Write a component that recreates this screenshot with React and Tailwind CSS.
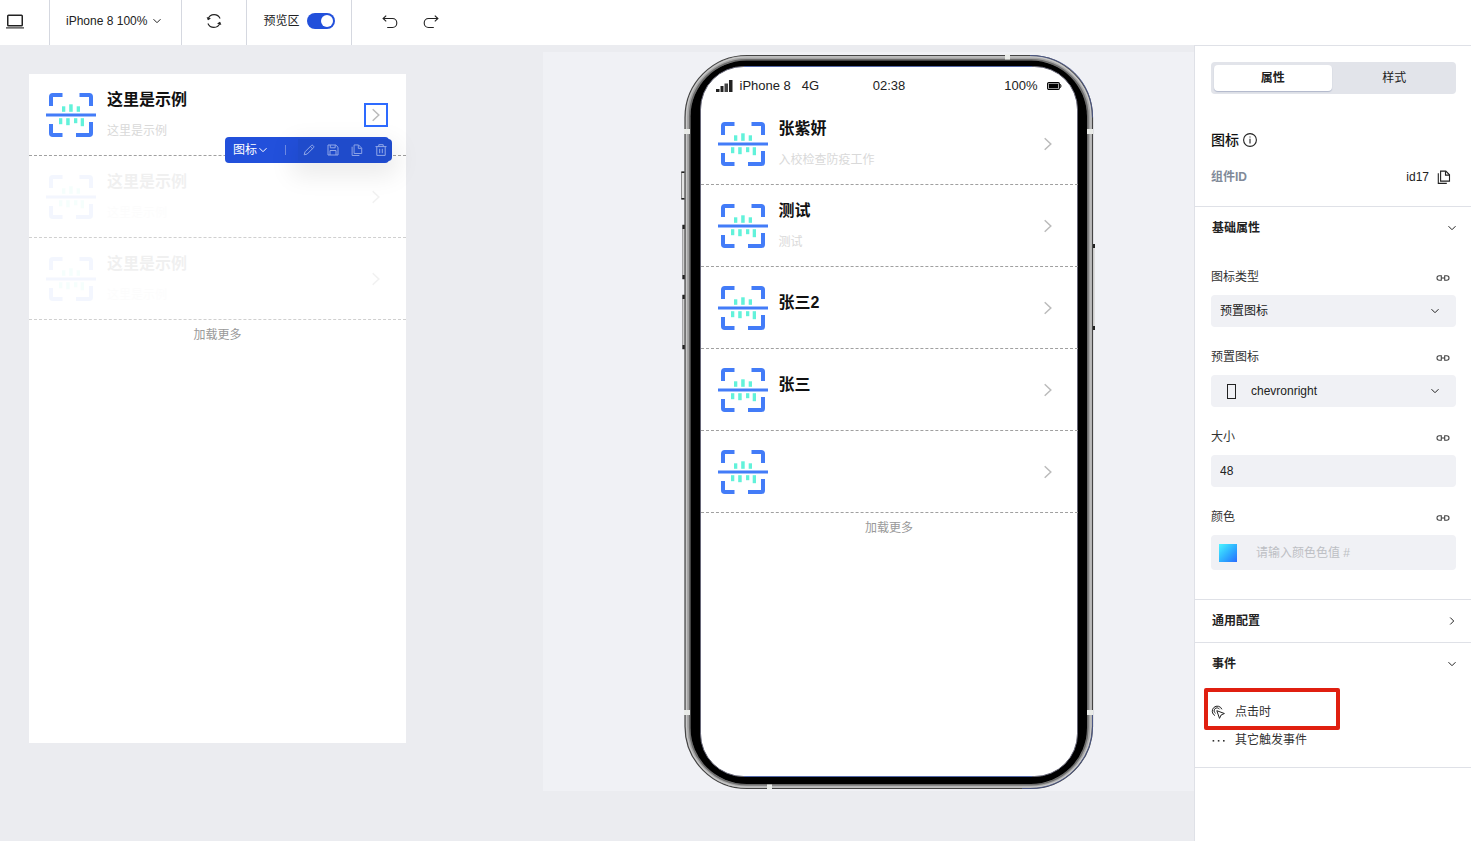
import React from "react";

function ChevronDown({ className = "" }) {
  return (
    <svg width="10" height="10" viewBox="0 0 10 10" fill="none" stroke="currentColor" className={className} aria-hidden="true">
      <path d="M1.5 3.2 5 6.700 8.500 3.200" strokeWidth="1" />
    </svg>
  );
}

function ChevronRightSmall() {
  return (
    <svg width="10" height="10" viewBox="0 0 10 10" fill="none" stroke="currentColor" aria-hidden="true">
      <path d="M3.2 1.5 6.7 5 3.2 8.5" strokeWidth="1" />
    </svg>
  );
}

function LaptopIcon() {
  return (
    <svg width="18" height="16" viewBox="0 0 18 16" fill="none" stroke="#222" aria-hidden="true">
      <rect x="1.75" y="1.25" width="14.5" height="10.5" rx="0.8" strokeWidth="1.5" />
      <path d="M0 13.9H18" strokeWidth="1.1" />
    </svg>
  );
}

function RefreshIcon() {
  return (
    <svg width="16" height="16" viewBox="0 0 16 16" fill="none" stroke="#222" strokeWidth="1.1" aria-hidden="true">
      <path d="M1.9 6.4C2.8 3.6 5.2 1.6 8.1 1.6c2.7 0 5 1.5 6 3.9" />
      <path d="M14.1 9.6c-.9 2.8-3.300 4.800-6.200 4.800-2.700 0-5-1.500-6-3.900" />
      <path d="M.6 4.1 2 7.2l3-1.6z" fill="#222" stroke="none" />
      <path d="M15.4 12.1 14 8.8l-3 1.8z" fill="#222" stroke="none" />
    </svg>
  );
}

function UndoIcon({ flip }) {
  return (
    <svg width="16" height="16" viewBox="0 0 16 16" fill="none" stroke="#222" strokeWidth="1.1" className={flip ? "-scale-x-100" : ""} aria-hidden="true">
      <path d="M4.200 1.600 1.100 4.500l3.100 2.900" />
      <path d="M1.200 4.500h9.300c2.500 0 4.300 2 4.300 4.500s-1.800 4.500-4.300 4.500H5.200" />
    </svg>
  );
}

function CopyIcon({ size = 14 }) {
  return (
    <svg width={size} height={size} viewBox="0 0 14 14" fill="none" stroke="currentColor" strokeWidth="1.1" aria-hidden="true">
      <path d="M3.600 1.100h5.200l3.700 3.700v6.300H3.600z" />
      <path d="M8.500 1.300v3.800h3.800" />
      <path d="M1.300 3.200v10.200h8.500" />
    </svg>
  );
}

function PencilIcon() {
  return (
    <svg width="12" height="12" viewBox="0 0 12 12" fill="none" stroke="currentColor" aria-hidden="true">
      <path d="M1.200 10.800 2 7.800 8.300 1.500a1.200 1.200 0 0 1 1.700 0l.5.5a1.200 1.200 0 0 1 0 1.700L4.200 10z" />
      <path d="M7.300 2.500l2.200 2.200" />
    </svg>
  );
}

function SaveIcon() {
  return (
    <svg width="12" height="12" viewBox="0 0 12 12" fill="none" stroke="currentColor" aria-hidden="true">
      <path d="M1 1h7.800L11 3.200V11H1z" />
      <path d="M3.300 1v2.800h4.900V1M3 11V6.500h6V11" />
    </svg>
  );
}

function TrashIcon() {
  return (
    <svg width="12" height="12" viewBox="0 0 12 12" fill="none" stroke="currentColor" aria-hidden="true">
      <path d="M.5 2.600h11M3.800 2.500V.7h4.400v1.800M1.800 2.600v8.800h8.400V2.600M4.700 4.800v4.400M7.300 4.800v4.400" />
    </svg>
  );
}

function InfoIcon() {
  return (
    <svg width="14" height="14" viewBox="0 0 14 14" fill="none" stroke="#222" aria-hidden="true">
      <circle cx="7" cy="7" r="6.4" strokeWidth="1.1" />
      <path d="M7 5.800v4.700M7 3.400v1.200" strokeWidth="1.1" />
    </svg>
  );
}

function LinkIcon() {
  return (
    <svg width="14" height="8" viewBox="0 0 14 8" fill="none" stroke="#444" strokeWidth="1.1" aria-hidden="true">
      <path d="M5.300 1.800H3.200C1.800 1.800 1 2.700 1 4s.8 2.200 2.200 2.200h2.100z" />
      <path d="M8.700 1.800h2.100C12.200 1.800 13 2.700 13 4s-.8 2.200-2.200 2.200H8.700z" />
      <path d="M5.300 4h3.400" />
    </svg>
  );
}

function ClickIcon() {
  return (
    <svg width="14" height="14" viewBox="0 0 14 14" fill="none" stroke="#222" strokeWidth="1" aria-hidden="true">
      <path d="M4 10.600A5 5 0 1 1 10.900 4.300" />
      <path d="M4.600 8.300A2.900 2.900 0 1 1 8.500 4.300" />
      <path d="M5.800 5.700 13.400 8.500 10.100 10 8.500 13.400z" strokeLinejoin="round" />
    </svg>
  );
}

function ScanIcon() {
  return (
    <svg width="50" height="50" viewBox="0 0 50 50" fill="none" className="shrink-0" aria-hidden="true">
      <g stroke="#437cf8" strokeWidth="4">
        <path d="M5 16V6.800q0-1.800 1.800-1.800H16.500" />
        <path d="M33.500 5h9.700q1.800 0 1.800 1.800V16" />
        <path d="M5 34v9.200q0 1.800 1.800 1.800H16.500" />
        <path d="M30 45h13.200q1.800 0 1.800-1.800V32" />
      </g>
      <path d="M0 25H50" stroke="#437cf8" strokeWidth="3" />
      <g fill="#62f2da">
        <rect x="16" y="16.300" width="3.300" height="5.500" />
        <rect x="23.200" y="14.300" width="3.500" height="7.500" />
        <rect x="30.700" y="16.300" width="3.300" height="5.500" />
        <rect x="13" y="28.200" width="3.300" height="6" />
        <rect x="20.200" y="28.200" width="3.500" height="7" />
        <rect x="28" y="28.200" width="3.300" height="5" />
        <rect x="34.700" y="28.200" width="3.300" height="8" />
      </g>
    </svg>
  );
}

function ListRow({ title, subtitle, faded, selected, children }) {
  return (
    <div className={`relative h-[82px] border-b border-dashed ${faded ? "border-[#d0d0d0]" : "border-[#a0a0a0]"}`}>
      <div className="flex h-full items-center pr-[18px] pl-[17px]">
        <div className={`flex flex-1 items-center ${faded ? "opacity-6" : ""}`}>
          <ScanIcon />
          <div className="ml-[11px] flex-1 pb-px">
            <div className="h-6 text-[16px] leading-6 font-bold text-[#111]">{title}</div>
            <div className="mt-[9px] text-[12px] leading-5 text-[#d9d9d9]">{subtitle}</div>
          </div>
        </div>
        <div className={`flex size-6 items-center justify-center ${selected ? "border-2 border-[#2e6bff]" : ""} ${faded ? "opacity-20" : ""}`}>
          <svg width="10" height="14" viewBox="0 0 10 14" fill="none" stroke="#bbb" strokeWidth="1.500" aria-hidden="true" className="shrink-0">
            <path d="M1.700 1.200 7.800 7 1.700 12.800" />
          </svg>
        </div>
      </div>
      {children}
    </div>
  );
}

function LoadMore() {
  return (
    <button type="button" className="block h-[30px] w-full text-center text-[12px] leading-[30px] text-[#999]">
      加载更多
    </button>
  );
}

function Toolbar() {
  return (
    <div className="absolute top-[63px] right-[14px] z-10 flex h-[26px] w-[167px] items-center text-white">
      <div className="absolute inset-y-0 left-0 w-[164px] rounded bg-[#2250db]" />
      <button type="button" className="relative ml-2 flex items-center gap-px text-[12px] leading-5">
        图标
        <ChevronDown />
      </button>
      <span className="relative ml-[17px] h-2.5 w-px bg-[#6f8ce6]" />
      <div className="relative ml-auto flex h-[22px] items-center gap-3 rounded-r bg-[#1f4bcb] px-[5px] text-[#92a8e8] shadow-[0_9px_24px_6px_rgba(0,0,0,0.08)]">
        <button type="button" aria-label="编辑"><PencilIcon /></button>
        <button type="button" aria-label="保存"><SaveIcon /></button>
        <button type="button" aria-label="复制"><CopyIcon size={12} /></button>
        <button type="button" aria-label="删除"><TrashIcon /></button>
      </div>
    </div>
  );
}

function Board() {
  return (
    <div className="h-[669px] w-[377px] bg-white">
      <ListRow title="这里是示例" subtitle="这里是示例" selected>
        <Toolbar />
      </ListRow>
      <ListRow title="这里是示例" subtitle="这里是示例" faded />
      <ListRow title="这里是示例" subtitle="这里是示例" faded />
      <LoadMore />
    </div>
  );
}

function PhoneFrame() {
  return (
    <svg className="absolute inset-0 overflow-visible" width="410" height="736" viewBox="0 0 410 736" fill="none" aria-hidden="true">
      <g fill="#e4e4e4" stroke="#777" strokeWidth="0.8">
        <rect x="-2.500" y="118" width="4" height="27" />
        <rect x="-1.200" y="171" width="3" height="54" />
        <rect x="-1.200" y="241" width="3" height="54" />
      </g>
      <rect x="408.500" y="190" width="2.500" height="86" fill="#dcdcdc" />
      <g fill="#222">
        <rect x="-2.500" y="117.500" width="3" height="1.500" />
        <rect x="-2.500" y="144" width="3" height="1.500" />
        <rect x="-1.500" y="171" width="2.500" height="4" />
        <rect x="-1.500" y="221" width="2.500" height="4" />
        <rect x="-1.500" y="241" width="2.500" height="4" />
        <rect x="-1.500" y="291" width="2.500" height="4" />
        <rect x="409" y="190" width="2" height="4" />
        <rect x="409" y="272" width="2" height="4" />
      </g>
      <rect x="1" y="1.500" width="407.500" height="733" rx="62" fill="#a4a4a4" stroke="#444" strokeWidth="1.200" />
      <rect x="2.500" y="2.800" width="404.500" height="730.400" rx="60.500" stroke="#c8c8c8" strokeWidth="1.200" />
      <rect x="5.700" y="5.700" width="398.100" height="725" rx="57" stroke="#6c6c6c" strokeWidth="1.600" />
      <rect x="6.500" y="6.500" width="396.500" height="723.500" rx="56" fill="#000" />
      <rect x="16.500" y="12.500" width="377" height="710" rx="43" fill="#fff" stroke="#667" strokeWidth="1" />
      <path d="M60 12.500H348M60 722.500H348" stroke="#5468a8" />
      <path d="M338 734.500h8.500c34 0 62-28 62-62v-14M346 1.500c36 0 62.500 26 62.500 62" stroke="#4b5a94" strokeWidth="0.8" />
      <g fill="#e9ebe8">
        <rect x="321" y="0.500" width="5" height="5" />
        <rect x="83" y="730.500" width="5" height="5" />
        <rect x="0" y="75" width="6" height="5" />
        <rect x="403" y="75" width="6" height="5" />
        <rect x="0" y="656" width="6" height="5" />
        <rect x="403" y="656" width="6" height="5" />
      </g>
    </svg>
  );
}

const RECORDS = [
  { title: "张紫妍", subtitle: "入校检查防疫工作" },
  { title: "测试", subtitle: "测试" },
  { title: "张三2", subtitle: "" },
  { title: "张三", subtitle: "" },
  { title: "", subtitle: "" },
];

function Phone() {
  return (
    <div className="relative h-[736px] w-[410px] pt-[13px] pr-4 pb-[14px] pl-[17px]">
      <PhoneFrame />
      <div className="relative">
        <div className="grid h-9 grid-cols-3 items-center px-[15px] pt-0.5 text-[13px] leading-5 text-[#222]">
          <div className="flex items-center gap-[7px] whitespace-nowrap">
            <svg width="17" height="12" viewBox="0 0 17 12" fill="#222" aria-hidden="true">
              <rect x="0" y="9" width="3.500" height="3" />
              <rect x="4.500" y="6" width="3" height="6" />
              <rect x="8.500" y="3.500" width="3.500" height="8.500" fill="#444" />
              <rect x="13" y="0" width="3.500" height="12" />
            </svg>
            <span>iPhone 8</span>
            <span className="pl-1">4G</span>
          </div>
          <div className="text-center">02:38</div>
          <div className="flex items-center justify-end gap-2.5">
            <span>100%</span>
            <svg width="15" height="8" viewBox="0 0 15 8" fill="none" aria-hidden="true">
              <rect x="0.600" y="0.600" width="11.800" height="6.800" rx="1.200" stroke="#000" strokeWidth="1.100" />
              <rect x="1.800" y="1.800" width="9.400" height="4.400" rx="0.500" fill="#000" />
              <path d="M13 2.200c1.300.2 1.300 3.400 0 3.600" stroke="#000" />
            </svg>
          </div>
        </div>
        {RECORDS.map((r, i) => (
          <ListRow key={i} title={r.title} subtitle={r.subtitle} />
        ))}
        <LoadMore />
      </div>
    </div>
  );
}

function Field({ id, label, children }) {
  return (
    <div>
      <div className="mb-2 flex h-5 items-center justify-between pr-1.5">
        <label htmlFor={id} className="text-[12px] leading-5 text-[#333]">{label}</label>
        <button type="button" aria-label="绑定" className="mt-0.5"><LinkIcon /></button>
      </div>
      {children}
    </div>
  );
}

function SectionHeader({ title, open }) {
  return (
    <button type="button" className="flex h-[42px] w-full items-center justify-between pr-[14px] pl-[17px] text-[12px] leading-5 font-bold text-[#222]">
      {title}
      {open ? <ChevronDown /> : <ChevronRightSmall />}
    </button>
  );
}

function Sidebar() {
  return (
    <aside className="w-[277px] shrink-0 border-t border-l border-[#dfe1e7] bg-white text-[12px] text-[#222]">
      <div className="border-b border-[#dfe1e7] pt-4 pr-[15px] pb-[17px] pl-4">
        <div role="tablist" className="grid h-8 grid-cols-2 gap-1 rounded bg-[#e2e4ea] p-[3px]">
          <button type="button" role="tab" aria-selected="true" className="rounded-sm bg-white font-bold shadow-[0_1px_1px_rgba(60,80,130,0.3)]">属性</button>
          <button type="button" role="tab" aria-selected="false">样式</button>
        </div>
        <h2 className="mt-[34px] flex h-6 items-center gap-1 text-[14px] font-medium text-[#111]">
          图标 <InfoIcon />
        </h2>
        <div className="mt-[13px] flex h-6 items-center justify-between pr-[5px]">
          <span className="font-bold text-[#818a99]">组件ID</span>
          <span className="flex items-center gap-2">
            id17
            <button type="button" aria-label="复制ID"><CopyIcon /></button>
          </span>
        </div>
      </div>

      <section className="border-b border-[#dfe1e7] pb-[29px]">
        <SectionHeader title="基础属性" open />
        <div className="flex flex-col gap-5 pt-[18px] pr-[15px] pl-4">
          <Field id="icon-type" label="图标类型">
            <div className="relative">
              <select id="icon-type" className="h-8 w-full appearance-none rounded-sm bg-[#f0f1f5] px-[9px] text-[12px]">
                <option>预置图标</option>
              </select>
              <ChevronDown className="pointer-events-none absolute top-[11px] right-4" />
            </div>
          </Field>
          <Field id="icon-name" label="预置图标">
            <div className="relative">
              <select id="icon-name" className="h-8 w-full appearance-none rounded-sm bg-[#f0f1f5] pr-8 pl-10 text-[12px]">
                <option>chevronright</option>
              </select>
              <svg width="9" height="15" viewBox="0 0 9 15" fill="none" stroke="#222" className="pointer-events-none absolute top-[9px] left-4" aria-hidden="true">
                <rect x="0.500" y="0.500" width="8" height="14" />
              </svg>
              <ChevronDown className="pointer-events-none absolute top-[11px] right-4" />
            </div>
          </Field>
          <Field id="icon-size" label="大小">
            <input id="icon-size" type="text" defaultValue="48" className="block h-8 w-full rounded-sm bg-[#f0f1f5] px-[9px] text-[12px]" />
          </Field>
          <Field id="icon-color" label="颜色">
            <div className="flex h-[35px] items-center gap-[19px] rounded-sm bg-[#f0f1f5] pl-2">
              <span className="size-[18px] bg-linear-to-br from-[#4df5ff] to-[#2d6bff]" />
              <input id="icon-color" type="text" placeholder="请输入颜色色值 #" className="min-w-0 flex-1 bg-transparent text-[12px] placeholder:text-[#bdbfc4]" />
            </div>
          </Field>
        </div>
      </section>

      <section className="border-b border-[#dfe1e7]">
        <SectionHeader title="通用配置" />
      </section>

      <section className="border-b border-[#dfe1e7] pb-[13px]">
        <SectionHeader title="事件" open />
        <div className="pt-[13px] pr-[15px] pl-4">
          <div className="relative">
            <button type="button" className="flex h-7 items-center gap-2.5 text-[12px] text-[#333]">
              <ClickIcon />
              点击时
            </button>
            <div className="pointer-events-none absolute -top-2.5 -left-[7px] h-[42px] w-[136px] rounded-xs border-4 border-[#e01f10]" />
          </div>
          <button type="button" className="flex h-7 items-center gap-2.5 text-[12px] text-[#333]">
            <svg width="14" height="14" viewBox="0 0 14 14" fill="#333" aria-hidden="true">
              <rect x="1.600" y="7" width="1.600" height="1.600" />
              <rect x="6.800" y="7" width="1.600" height="1.600" />
              <rect x="12" y="7" width="1.600" height="1.600" />
            </svg>
            其它触发事件
          </button>
        </div>
      </section>
    </aside>
  );
}

function Header() {
  return (
    <header className="flex h-[45px] shrink-0 items-stretch bg-white text-[12px] leading-5 text-[#222]">
      <div className="flex items-center border-r border-[#d5d8e0] pr-[25px] pb-0.5 pl-1.5">
        <button type="button" aria-label="设备"><LaptopIcon /></button>
      </div>
      <div className="flex items-center border-r border-[#d5d8e0] pr-[19px] pb-[3px] pl-4">
        <button type="button" className="flex items-center gap-[5px]">
          iPhone 8 100%
          <ChevronDown />
        </button>
      </div>
      <div className="flex items-center border-r border-[#d5d8e0] px-6 pb-[3px]">
        <button type="button" aria-label="刷新"><RefreshIcon /></button>
      </div>
      <div className="flex items-center gap-2 border-r border-[#d5d8e0] pr-4 pb-[3px] pl-4">
        <label htmlFor="preview">预览区</label>
        <input
          id="preview"
          type="checkbox"
          role="switch"
          defaultChecked
          className="flex h-4 w-7 appearance-none items-center rounded-full bg-[#2250db] pl-[14px] before:block before:size-3 before:rounded-full before:bg-white before:content-['']"
        />
      </div>
      <div className="flex items-center gap-[25px] pb-px pl-[30px]">
        <button type="button" aria-label="撤销"><UndoIcon /></button>
        <button type="button" aria-label="重做"><UndoIcon flip /></button>
      </div>
    </header>
  );
}

export default function App() {
  return (
    <div className="flex min-h-screen flex-col bg-[#ebecf0] font-['Liberation_Sans','Noto_Sans_CJK_SC',sans-serif]">
      <Header />
      <div className="flex flex-1">
        <main className="flex flex-1 items-start">
          <div className="flex-1 pt-[29px] pl-[29px]">
            <Board />
          </div>
          <div className="mt-[7px] flex w-[651px] justify-center bg-[#f0f1f5] pt-0.5 pb-px pl-10">
            <Phone />
          </div>
        </main>
        <Sidebar />
      </div>
    </div>
  );
}
